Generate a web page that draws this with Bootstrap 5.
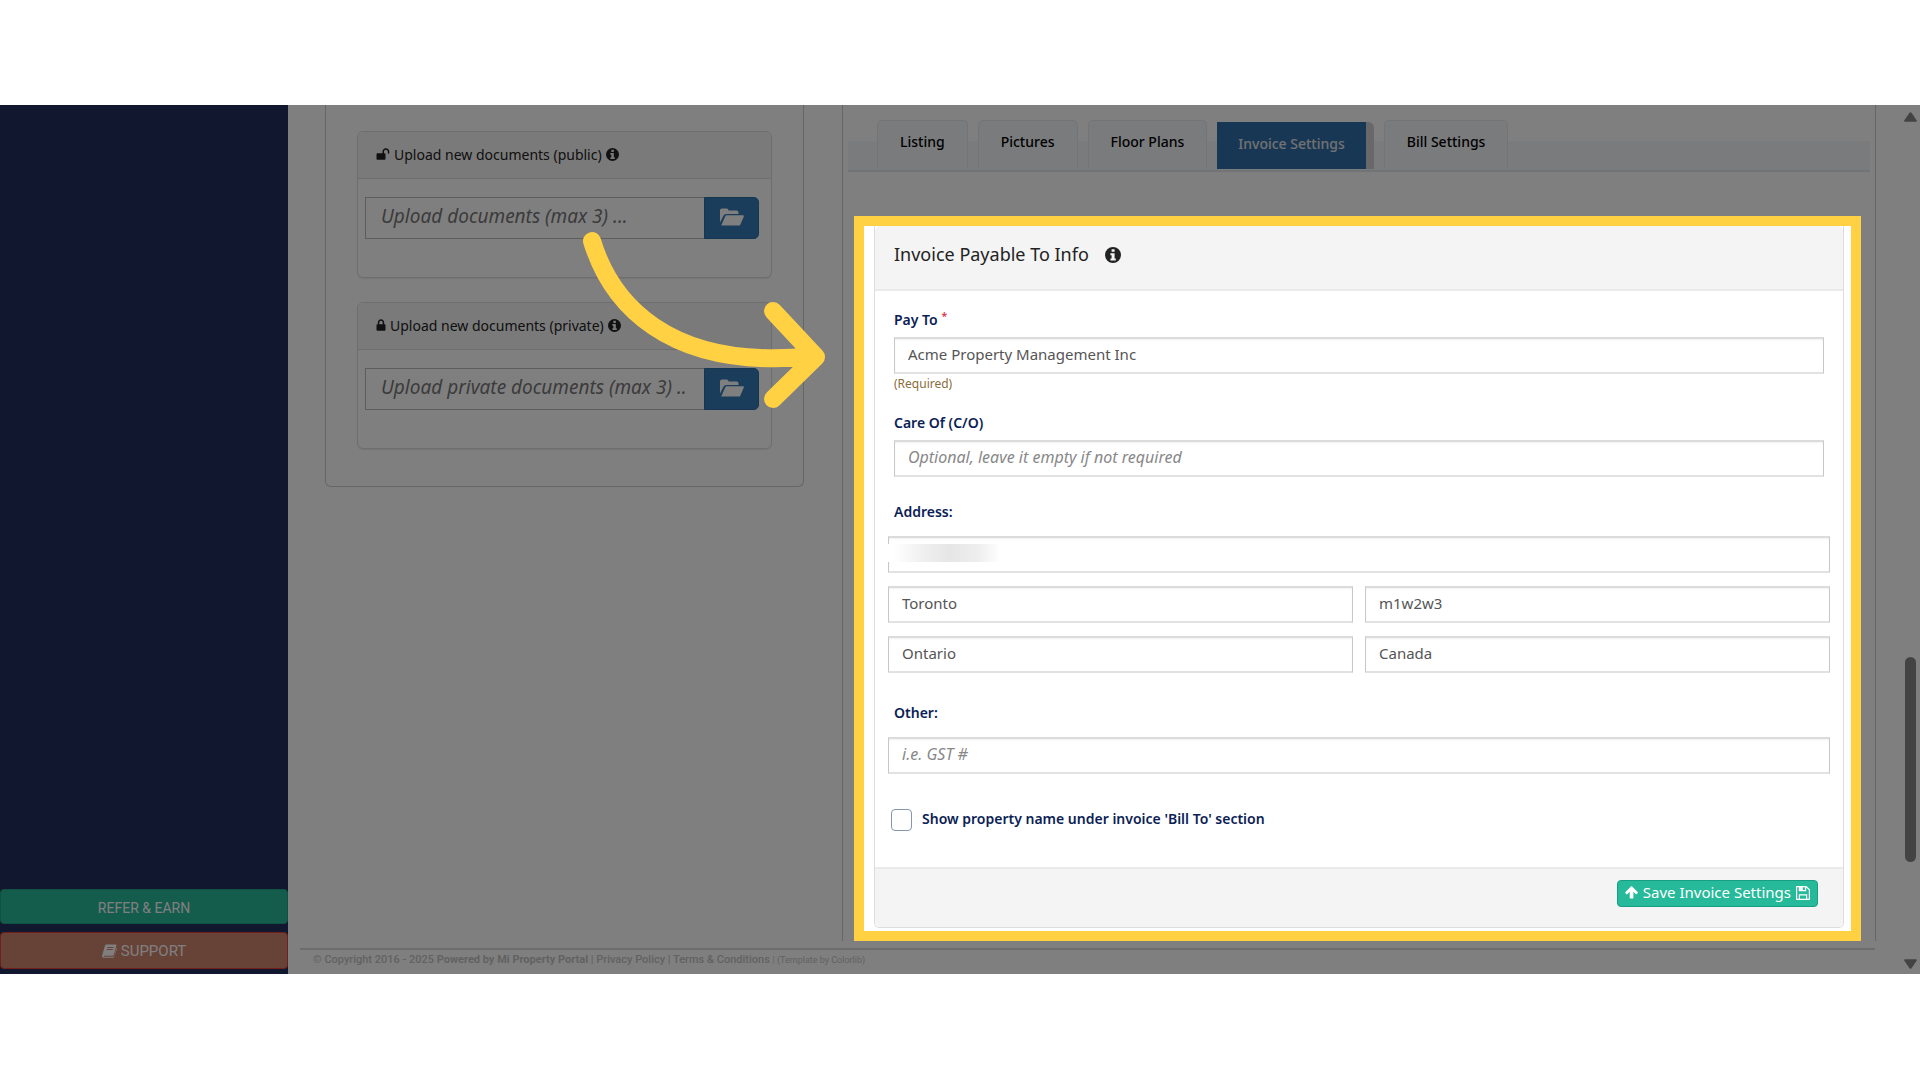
<!DOCTYPE html>
<html lang="en">
<head>
<meta charset="utf-8">
<meta name="viewport" content="width=device-width, initial-scale=1">
<title>Invoice Settings - Mi Property Portal</title>
<link rel="stylesheet" href="https://cdn.jsdelivr.net/npm/bootstrap@5.3.0/dist/css/bootstrap.min.css">
<style>
  :root { --gold: #ffd143; --line: #ddd; --ink: #222; --navy: #0b1e55; }
  body { background: #fff; font-family: "Noto Sans", "Open Sans", sans-serif; color: var(--ink); }
  svg { fill: currentColor; flex: none; }
  .guide { padding: 105px 0; }
  .stage { overflow: hidden; isolation: isolate; }

  .side-nav { width: 288px; background: #202f5e; padding-bottom: 5px; font-family: Roboto, sans-serif; }
  .side-nav .btn { height: 35px; padding: 3px 0 0; color: #fff; font-size: 14px; border-radius: 4px; }
  .btn-refer { background: #28b898; border-color: #1fa487; }
  .side-nav .btn-support { background: #ce846c; border-color: #e03e36; font-size: 15px; height: 37px; padding-top: 1px; }

  .workspace { display: grid; grid-template-columns: minmax(0, 479fr) minmax(0, 1034fr); align-items: start; padding: 0 44px 0 37px; column-gap: 38px; }
  .docs-col { border: 1px solid #ccc; border-top: 0; border-radius: 0 0 6px 6px; padding: 26px 31px 37px; }
  .settings-col { border: 1px solid #ccc; border-width: 0 1px; padding-top: 15px; }

  .doc-card { border-color: var(--line); border-radius: 6px; box-shadow: 0 1px 1px rgba(0,0,0,.08); height: 147px; }
  .doc-card .card-header { background: #f5f5f5; border-color: var(--line); height: 47px; padding: 0 18px 2px; font-size: 14px; }
  .doc-card .card-body { padding: 18px 12px 0 7px; }
  .doc-card .form-control { height: 42px; font-size: 19px; border-color: #bbb; border-radius: 0; padding: 0 8px 4px 15px; }
  .form-control::placeholder { color: #888; font-style: italic; }
  .doc-card .form-control::placeholder { color: #777; }
  .pay-card .form-control::placeholder { font-size: 16px; }
  .doc-card .btn { background: #337ab7; border-color: #2e6da4; color: #fff; width: 55px; padding: 0 0 5px; border-radius: 0 5px 5px 0; }

  .tab-strip { margin: 0 5px; padding-left: 29px; gap: 10px; border-bottom: 2px solid #e4e6ea; background: linear-gradient(transparent 21px, #f5f7fa 21px); height: 52px; }
  .tab-strip .nav-link { background: #f5f7fa; border: 1px solid #e6e9ed; border-bottom: 0; border-radius: 5px 5px 0 0; color: #000; font-size: 14px; font-weight: 500; height: 48px; padding: 0 22px; line-height: 42px; }
  .tab-strip .nav-link.active { background: #2f6ea9; color: #e4e4e4; border: 0; border-right: 8px solid #d0d0d4; height: 47px; margin-top: 2px; border-radius: 0 6px 0 0; padding: 0 21px; line-height: 44px; }

  /* Highlighted area: the wide shadow dims everything around it */
  .spotlight { position: relative; z-index: 2; margin: 44px 14px 0 11px; border: 10px solid var(--gold); background: #fff; padding: 0 7px 3px 10px; box-shadow: 0 0 0 3000px rgba(0,0,0,.5); }
  .pay-card { border-color: var(--line); border-top: 0; border-radius: 0 0 5px 5px; }
  .pay-card .card-header { background: #f4f4f4; height: 65px; padding: 0 19px 6px; border-bottom: 2px solid #eaeaea; }
  .pay-card .card-header h2 { font-size: 18px; font-weight: 400; margin: 0; }
  .pay-card .card-body { padding: 19px 19px 36px; }
  .pay-card label { display: block; font-size: 14px; line-height: 20px; font-weight: 600; color: var(--navy); margin-bottom: 7px; }
  .pay-card .form-control { height: 37px; border: 1px solid; border-width: 2px 1px; border-color: #dcdcdc #c8c8c8 #e2e2e2; border-radius: 0; font-size: 15px; color: #555; padding: 0 13px 4px; box-shadow: inset 0 1px 2px rgba(0,0,0,.06); }
  .hint { font-size: 12px; line-height: 20px; color: #8a6d3b; margin-bottom: 19px; }
  .pay-card .section-label { margin: 25px 0 14px; }
  .wide-rows { display: grid; gap: 13px; margin: 0 -6px 30px; }
  .pair { column-gap: 12px; }
  .redacted { top: 8px; left: 0; width: 112px; height: 18px; background: linear-gradient(90deg, #fff 5%, #f0f0f0 30%, #e6e6e6 55%, #eee 80%, #fff); }
  .show-name { margin: 35px 0 0 -3px; gap: 10px; }
  .pay-card .show-name label { margin: 0; }
  .pay-card .form-check-input { width: 21px; height: 22px; margin: 0; border: 1px solid #8496ac; border-radius: 4px; flex: none; }
  .pay-card .card-footer { background: #f4f4f4; border-top: 2px solid #eaeaea; border-radius: 0 0 5px 5px; height: 60px; padding: 11px 25px 0; }
  .btn-save { height: 27px; padding: 0 7px 2px; font-size: 15px; line-height: 1; color: #fff; background: #26b99a; border-color: #169f85; border-radius: 4px; gap: 5px; }
  .btn-save:hover { background: #169f85; color: #fff; }

  .site-foot { margin: 7px 45px 0 12px; border-top: 2px solid #d8d8d8; padding: 1px 13px 0; height: 26px; font: 500 11px/18px Roboto, sans-serif; color: #c4c4c4; }
  .site-foot a { color: inherit; text-decoration: none; }
  .site-foot .credit { font-size: 9px; font-weight: 400; }

  .page-scroll { right: 0; top: 0; bottom: 0; width: 20px; padding: 7px 0 5px; color: #868686; }
  .page-scroll .thumb { width: 11px; height: 205px; border-radius: 6px; background: #868686; margin-bottom: 97px; }
  .pointer-arrow { left: 575px; top: 120px; z-index: 3; pointer-events: none; }
</style>
</head>
<body>
<div class="guide">
  <div class="stage d-flex position-relative">
    <aside class="side-nav d-flex flex-column justify-content-end flex-shrink-0">
      <button type="button" class="btn btn-refer w-100 d-flex align-items-center justify-content-center mb-2">REFER &amp; EARN</button>
      <button type="button" class="btn btn-support w-100 d-flex align-items-center justify-content-center gap-1">
        <svg width="15" height="14" viewBox="0 0 15 14" aria-hidden="true"><path fill-rule="evenodd" d="M4.600.4h8.800c.9 0 1.300.6 1 1.400l-2.600 9c-.2.600-.7.900-1.300.900H2.300c-.8 0-.8 1 0 1h8.600c.8 0 1.300-.4 1.500-1L14.600 4c.5.300.4.800.300 1.200l-2.500 7.300c-.3.900-1 1.300-1.900 1.300H2C.6 13.800-.2 12.500.2 11.300L3 1.600C3.300.8 3.800.4 4.600.4zM5.500 3l-.3 1h6l.3-1zm-.6 2-.3 1h6l.3-1z"/></svg>SUPPORT</button>
    </aside>

    <main class="flex-grow-1">
      <div class="workspace">
        <section class="docs-col d-grid gap-4">
          <div class="card doc-card">
            <div class="card-header d-flex align-items-center gap-1">
              <svg width="14" height="12" viewBox="0 0 13 12" aria-hidden="true"><path d="M0 6.200C0 5.600.4 5.300.9 5.300H6V3.500C6 1.500 7.500.2 9.400.2s3.400 1.400 3.400 3.300v1.600c0 .8-1.500.8-1.500 0V3.600c0-1.100-.8-1.900-1.900-1.900s-1.900.8-1.900 1.900v1.700h.6c.6 0 .9.300.9.900v4.600c0 .6-.3.900-.9.900H.9c-.6 0-.9-.3-.9-.9z"/></svg>
              <label for="pub">Upload new documents (public)</label>
              <svg width="13" height="13" viewBox="0 0 16 16" aria-hidden="true"><path fill-rule="evenodd" d="M8 0a8 8 0 1 0 0 16A8 8 0 0 0 8 0zM6.600 2.300h3v2.500h-3zM5.400 6.200h4.200v5.300h1.200v2H5.400v-2h1.200V8.200H5.400z"/></svg>
            </div>
            <div class="card-body">
              <div class="input-group flex-nowrap">
                <input class="form-control" id="pub" placeholder="Upload documents (max 3) ...">
                <button type="button" class="btn" aria-label="Browse public documents"><svg width="24" height="18" viewBox="0 0 24 18" aria-hidden="true"><path d="M0 14.500V2.500C0 1.200.8.500 2 .500h4.500c1.200 0 2 .8 2 2h8c1.200 0 2 .8 2 2V6H6.500C5 6 4 6.700 3.300 8zM1.500 16.800 5.200 8.600C5.600 7.700 6.200 7.300 7 7.300h16c.8 0 1.100.5.800 1.200l-3.400 7.900c-.4.800-1 1.200-1.800 1.200H2c-.6 0-.8-.3-.5-.8z"/></svg></button>
              </div>
            </div>
          </div>
          <div class="card doc-card">
            <div class="card-header d-flex align-items-center gap-1">
              <svg width="10" height="12" viewBox="0 0 9 12" aria-hidden="true"><path fill-rule="evenodd" d="M1.300 5.200V3.400C1.300 1.500 2.700.2 4.500.2s3.200 1.300 3.200 3.200v1.800h.4c.6 0 .9.400.9.900v4.700c0 .6-.3.900-.9.900H.9c-.6 0-.9-.3-.9-.9V6.100c0-.5.3-.9.900-.9zm1.500 0h3.400V3.500c0-1.100-.7-1.800-1.700-1.800s-1.700.7-1.700 1.800z"/></svg>
              <label for="priv">Upload new documents (private)</label>
              <svg width="13" height="13" viewBox="0 0 16 16" aria-hidden="true"><path fill-rule="evenodd" d="M8 0a8 8 0 1 0 0 16A8 8 0 0 0 8 0zM6.600 2.300h3v2.500h-3zM5.400 6.200h4.200v5.300h1.200v2H5.400v-2h1.200V8.200H5.400z"/></svg>
            </div>
            <div class="card-body">
              <div class="input-group flex-nowrap">
                <input class="form-control" id="priv" placeholder="Upload private documents (max 3) ..">
                <button type="button" class="btn" aria-label="Browse private documents"><svg width="24" height="18" viewBox="0 0 24 18" aria-hidden="true"><path d="M0 14.500V2.500C0 1.200.8.500 2 .500h4.500c1.200 0 2 .8 2 2h8c1.200 0 2 .8 2 2V6H6.500C5 6 4 6.700 3.300 8zM1.500 16.800 5.200 8.600C5.600 7.700 6.200 7.300 7 7.300h16c.8 0 1.100.5.800 1.200l-3.400 7.900c-.4.800-1 1.200-1.800 1.200H2c-.6 0-.8-.3-.5-.8z"/></svg></button>
              </div>
            </div>
          </div>
        </section>

        <section class="settings-col">
          <nav class="nav tab-strip">
            <a class="nav-link" href="#listing">Listing</a>
            <a class="nav-link" href="#pictures">Pictures</a>
            <a class="nav-link" href="#floor-plans">Floor Plans</a>
            <a class="nav-link active" href="#invoice" aria-current="page">Invoice Settings</a>
            <a class="nav-link" href="#bill">Bill Settings</a>
          </nav>

          <div class="spotlight">
            <form class="card pay-card">
              <div class="card-header d-flex align-items-center gap-3">
                <h2>Invoice Payable To Info</h2>
                <svg width="16" height="16" viewBox="0 0 16 16" aria-hidden="true"><path fill-rule="evenodd" d="M8 0a8 8 0 1 0 0 16A8 8 0 0 0 8 0zM6.600 2.300h3v2.500h-3zM5.400 6.200h4.200v5.300h1.200v2H5.400v-2h1.200V8.200H5.400z"/></svg>
              </div>
              <div class="card-body">
                <label for="payTo">Pay To <sup class="text-danger">*</sup></label>
                <input class="form-control" id="payTo" value="Acme Property Management Inc">
                <div class="hint">(Required)</div>
                <label for="careOf">Care Of (C/O)</label>
                <input class="form-control" id="careOf" placeholder="Optional, leave it empty if not required">
                <label for="street" class="section-label">Address:</label>
                <div class="wide-rows">
                  <div class="position-relative">
                    <input class="form-control" id="street">
                    <span class="redacted position-absolute"></span>
                  </div>
                  <div class="pair d-flex">
                    <input class="form-control" aria-label="City" value="Toronto">
                    <input class="form-control" aria-label="Postal code" value="m1w2w3">
                  </div>
                  <div class="pair d-flex">
                    <input class="form-control" aria-label="Province" value="Ontario">
                    <input class="form-control" aria-label="Country" value="Canada">
                  </div>
                </div>
                <label for="other" class="section-label">Other:</label>
                <div class="wide-rows">
                  <input class="form-control" id="other" placeholder="i.e. GST #">
                </div>
                <div class="show-name d-flex">
                  <input type="checkbox" class="form-check-input" id="showName">
                  <label for="showName">Show property name under invoice 'Bill To' section</label>
                </div>
              </div>
              <div class="card-footer d-flex justify-content-end align-items-start">
                <button type="submit" class="btn btn-save d-flex align-items-center">
                  <svg width="13" height="13" viewBox="0 0 13 13" aria-hidden="true"><path d="M5.900.5c.4-.4.900-.4 1.300 0l5.400 5.400c.4.400.4.900 0 1.300l-.7.700c-.4.400-.9.400-1.300 0L8.400 5.800v5.900c0 .5-.4.900-.9.900H5.600c-.5 0-.9-.4-.9-.9V5.800L2.500 7.900c-.4.400-.9.400-1.300 0l-.7-.7c-.4-.4-.4-.9 0-1.300z"/></svg>
                  Save Invoice Settings
                  <svg width="14" height="14" viewBox="0 0 14 14" aria-hidden="true"><path fill-rule="evenodd" d="M1 0h9.400L14 3.600V13c0 .6-.4 1-1 1H1c-.6 0-1-.4-1-1V1c0-.6.4-1 1-1zm.2 1.200v11.600h1.600V8.200h8.400v4.600h1.600V4.100l-2.600-2.600v3.700H2.800v-4zM4 9.400v3.400h6V9.400zM6.800 1.200V4h2.100V1.200z"/></svg>
                </button>
              </div>
            </form>
          </div>
        </section>
      </div>
      <footer class="site-foot">© Copyright 2016 - 2025 <b>Powered by Mi Property Portal</b> | <a href="#privacy">Privacy Policy</a> | <a href="#terms">Terms &amp; Conditions</a> <span class="credit">| (Template by Colorlib)</span></footer>
    </main>

    <div class="page-scroll position-absolute d-flex flex-column align-items-center" aria-hidden="true">
      <svg width="13" height="10" viewBox="0 0 13 10"><path d="M5.500.7c.5-.7 1.500-.7 2 0L12.800 8.500c.3.800 0 1.300-.8 1.300H1C.2 9.800-.1 9.300.200 8.500z"/></svg>
      <span class="thumb mt-auto"></span>
      <svg width="13" height="10" viewBox="0 0 13 10"><path d="M5.500 9.300c.5.700 1.500.7 2 0L12.800 1.500c.3-.8 0-1.300-.8-1.300H1C.2.2-.1.700.200 1.500z"/></svg>
    </div>

    <svg class="pointer-arrow position-absolute" width="260" height="190" viewBox="575 225 260 190" aria-hidden="true"><path d="M592 241C610 300 665 372 814 356M773 311 816 357 773 399" fill="none" stroke="#ffd143" stroke-width="18" stroke-linecap="round" stroke-linejoin="round"/></svg>
  </div>
</div>
<script src="https://cdn.jsdelivr.net/npm/bootstrap@5.3.0/dist/js/bootstrap.bundle.min.js"></script>
</body>
</html>
